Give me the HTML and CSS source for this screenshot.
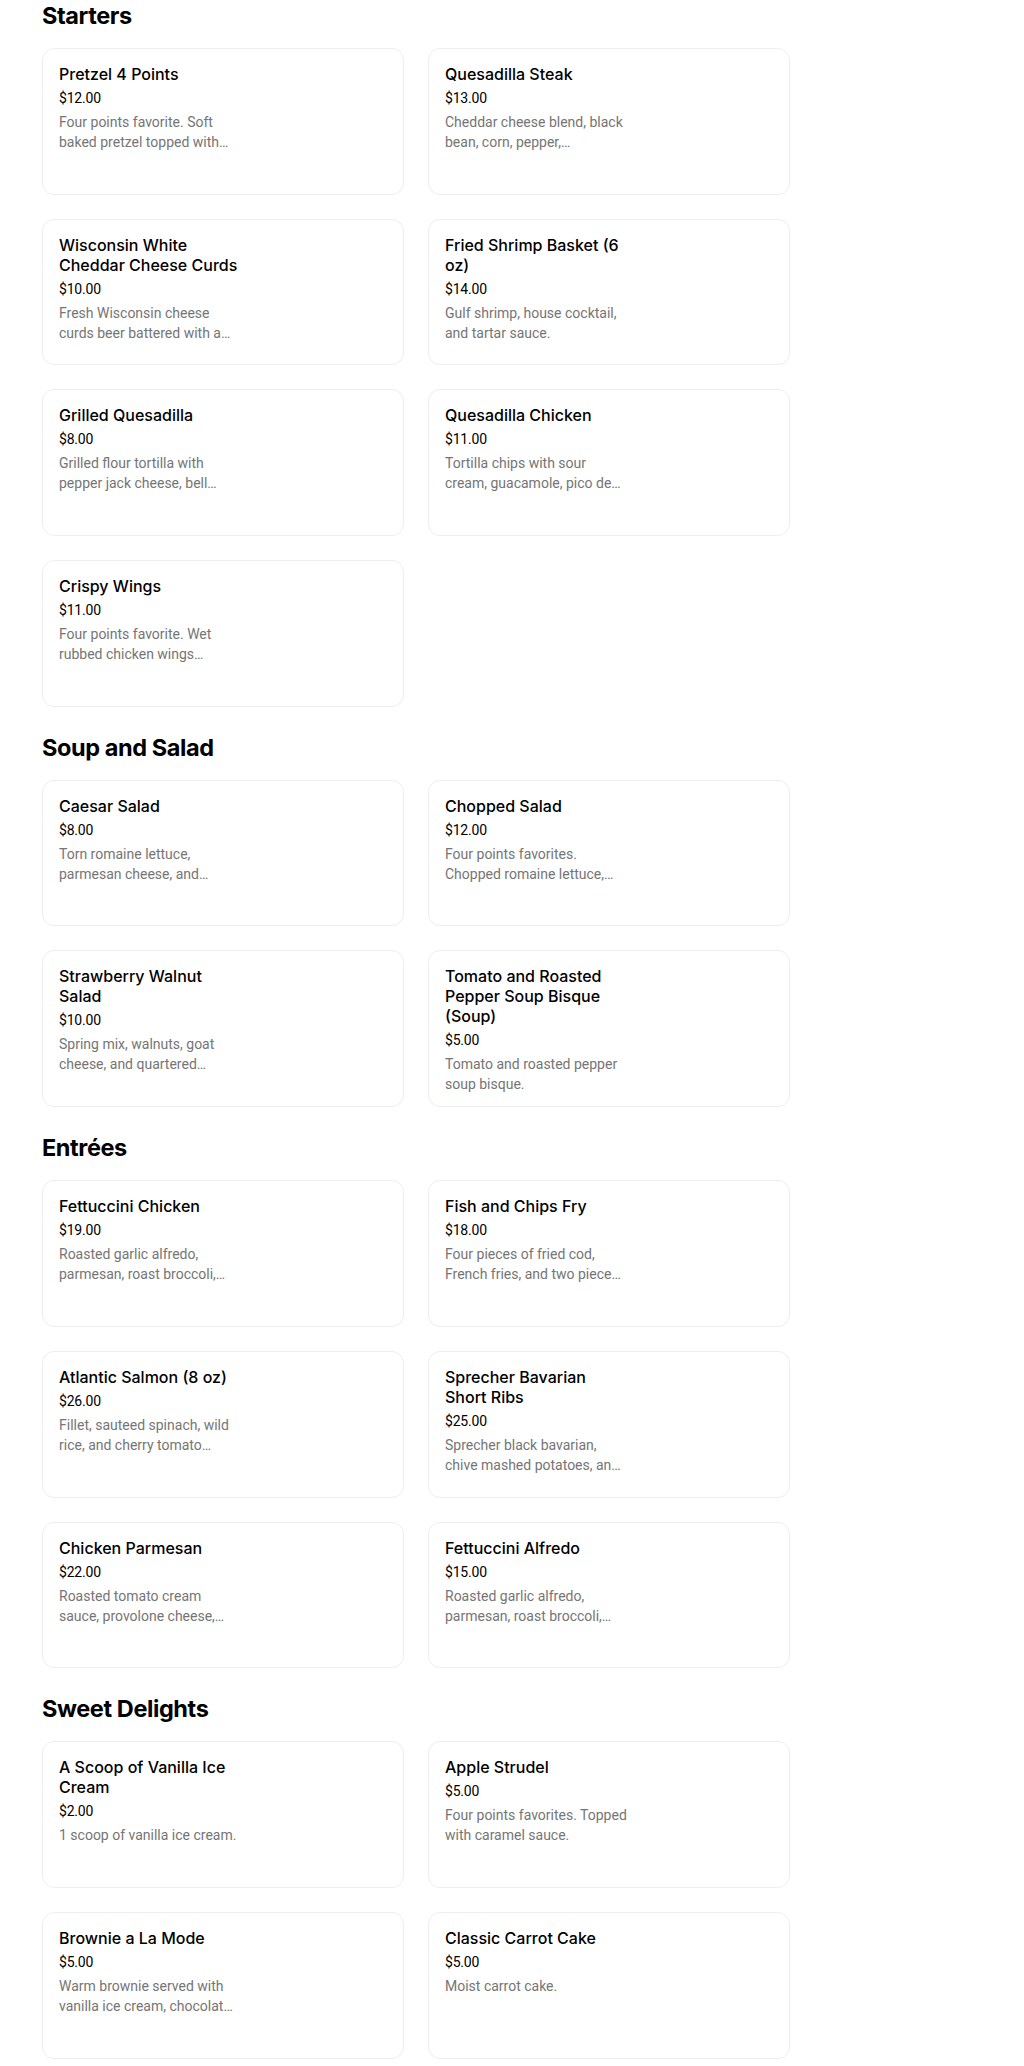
FILE: index.html
```html
<!DOCTYPE html>
<html lang="en">
<head>
<meta charset="utf-8">
<title>Menu</title>
<link rel="stylesheet" href="styles.css">
</head>
<body>
<main class="menu">
  <section class="section">
    <h2 class="section-title">Starters</h2>
    <div class="grid">
      <div class="card"><div class="info"><div class="name">Pretzel 4 Points</div><div class="price">$12.00</div><div class="desc">Four points favorite. Soft baked pretzel topped with…</div></div></div>
      <div class="card"><div class="info"><div class="name">Quesadilla Steak</div><div class="price">$13.00</div><div class="desc">Cheddar cheese blend, black bean, corn, pepper,…</div></div></div>
      <div class="card"><div class="info"><div class="name">Wisconsin White Cheddar Cheese Curds</div><div class="price">$10.00</div><div class="desc">Fresh Wisconsin cheese curds beer battered with a…</div></div></div>
      <div class="card"><div class="info"><div class="name">Fried Shrimp Basket (6 oz)</div><div class="price">$14.00</div><div class="desc">Gulf shrimp, house cocktail, and tartar sauce.</div></div></div>
      <div class="card"><div class="info"><div class="name">Grilled Quesadilla</div><div class="price">$8.00</div><div class="desc">Grilled flour tortilla with pepper jack cheese, bell…</div></div></div>
      <div class="card"><div class="info"><div class="name">Quesadilla Chicken</div><div class="price">$11.00</div><div class="desc">Tortilla chips with sour cream, guacamole, pico de…</div></div></div>
      <div class="card"><div class="info"><div class="name">Crispy Wings</div><div class="price">$11.00</div><div class="desc">Four points favorite. Wet rubbed chicken wings…</div></div></div>
    </div>
  </section>

  <section class="section">
    <h2 class="section-title">Soup and Salad</h2>
    <div class="grid">
      <div class="card"><div class="info"><div class="name">Caesar Salad</div><div class="price">$8.00</div><div class="desc">Torn romaine lettuce, parmesan cheese, and…</div></div></div>
      <div class="card"><div class="info"><div class="name">Chopped Salad</div><div class="price">$12.00</div><div class="desc">Four points favorites. Chopped romaine lettuce,…</div></div></div>
      <div class="card"><div class="info"><div class="name">Strawberry Walnut Salad</div><div class="price">$10.00</div><div class="desc">Spring mix, walnuts, goat cheese, and quartered…</div></div></div>
      <div class="card"><div class="info"><div class="name">Tomato and Roasted Pepper Soup Bisque (Soup)</div><div class="price">$5.00</div><div class="desc">Tomato and roasted pepper soup bisque.</div></div></div>
    </div>
  </section>

  <section class="section">
    <h2 class="section-title">Entrées</h2>
    <div class="grid">
      <div class="card"><div class="info"><div class="name">Fettuccini Chicken</div><div class="price">$19.00</div><div class="desc">Roasted garlic alfredo, parmesan, roast broccoli,…</div></div></div>
      <div class="card"><div class="info"><div class="name">Fish and Chips Fry</div><div class="price">$18.00</div><div class="desc">Four pieces of fried cod, French fries, and two piece…</div></div></div>
      <div class="card"><div class="info"><div class="name">Atlantic Salmon (8 oz)</div><div class="price">$26.00</div><div class="desc">Fillet, sauteed spinach, wild rice, and cherry tomato…</div></div></div>
      <div class="card"><div class="info"><div class="name">Sprecher Bavarian Short Ribs</div><div class="price">$25.00</div><div class="desc">Sprecher black bavarian, chive mashed potatoes, an…</div></div></div>
      <div class="card"><div class="info"><div class="name">Chicken Parmesan</div><div class="price">$22.00</div><div class="desc">Roasted tomato cream sauce, provolone cheese,…</div></div></div>
      <div class="card"><div class="info"><div class="name">Fettuccini Alfredo</div><div class="price">$15.00</div><div class="desc">Roasted garlic alfredo, parmesan, roast broccoli,…</div></div></div>
    </div>
  </section>

  <section class="section">
    <h2 class="section-title">Sweet Delights</h2>
    <div class="grid">
      <div class="card"><div class="info"><div class="name">A Scoop of Vanilla Ice Cream</div><div class="price">$2.00</div><div class="desc">1 scoop of vanilla ice cream.</div></div></div>
      <div class="card"><div class="info"><div class="name">Apple Strudel</div><div class="price">$5.00</div><div class="desc">Four points favorites. Topped with caramel sauce.</div></div></div>
      <div class="card"><div class="info"><div class="name">Brownie a La Mode</div><div class="price">$5.00</div><div class="desc">Warm brownie served with vanilla ice cream, chocolat…</div></div></div>
      <div class="card"><div class="info"><div class="name">Classic Carrot Cake</div><div class="price">$5.00</div><div class="desc">Moist carrot cake.</div></div></div>
    </div>
  </section>
</main>
</body>
</html>
```

FILE: styles.css
```css
* { box-sizing: border-box; }

html, body {
  margin: 0;
  padding: 0;
  background: #ffffff;
}

body {
  font-family: Inter, "Liberation Sans", Arial, sans-serif;
  color: #000000;
}

.menu {
  padding: 0 0 8px 42px;
  width: 790px;
}

.section + .section {
  margin-top: 25px;
}

.section-title {
  margin: 0 0 16px 0;
  font-size: 23.5px;
  line-height: 32px;
  font-weight: 700;
  letter-spacing: -0.4px;
  color: #000000;
}

.grid {
  display: grid;
  grid-template-columns: 362px 362px;
  column-gap: 24px;
  row-gap: 24px;
}

.card {
  min-height: 146.67px;
  border: 1px solid #eeeeee;
  border-radius: 12px;
  padding: 15px 16px 12px 16px;
  background: #ffffff;
}

.info {
  width: 183px;
}

.name {
  font-size: 16px;
  line-height: 20px;
  font-weight: 500;
  color: #000000;
}

.price {
  margin-top: 4px;
  font-family: Roboto, "Liberation Sans", Arial, sans-serif;
  font-size: 14px;
  line-height: 20px;
  font-weight: 400;
  color: #000000;
  letter-spacing: -0.2px;
}

.desc {
  margin-top: 4px;
  font-family: Roboto, "Liberation Sans", Arial, sans-serif;
  font-size: 14px;
  line-height: 20px;
  color: #757575;
  display: -webkit-box;
  -webkit-line-clamp: 2;
  -webkit-box-orient: vertical;
  overflow: hidden;
}
```
